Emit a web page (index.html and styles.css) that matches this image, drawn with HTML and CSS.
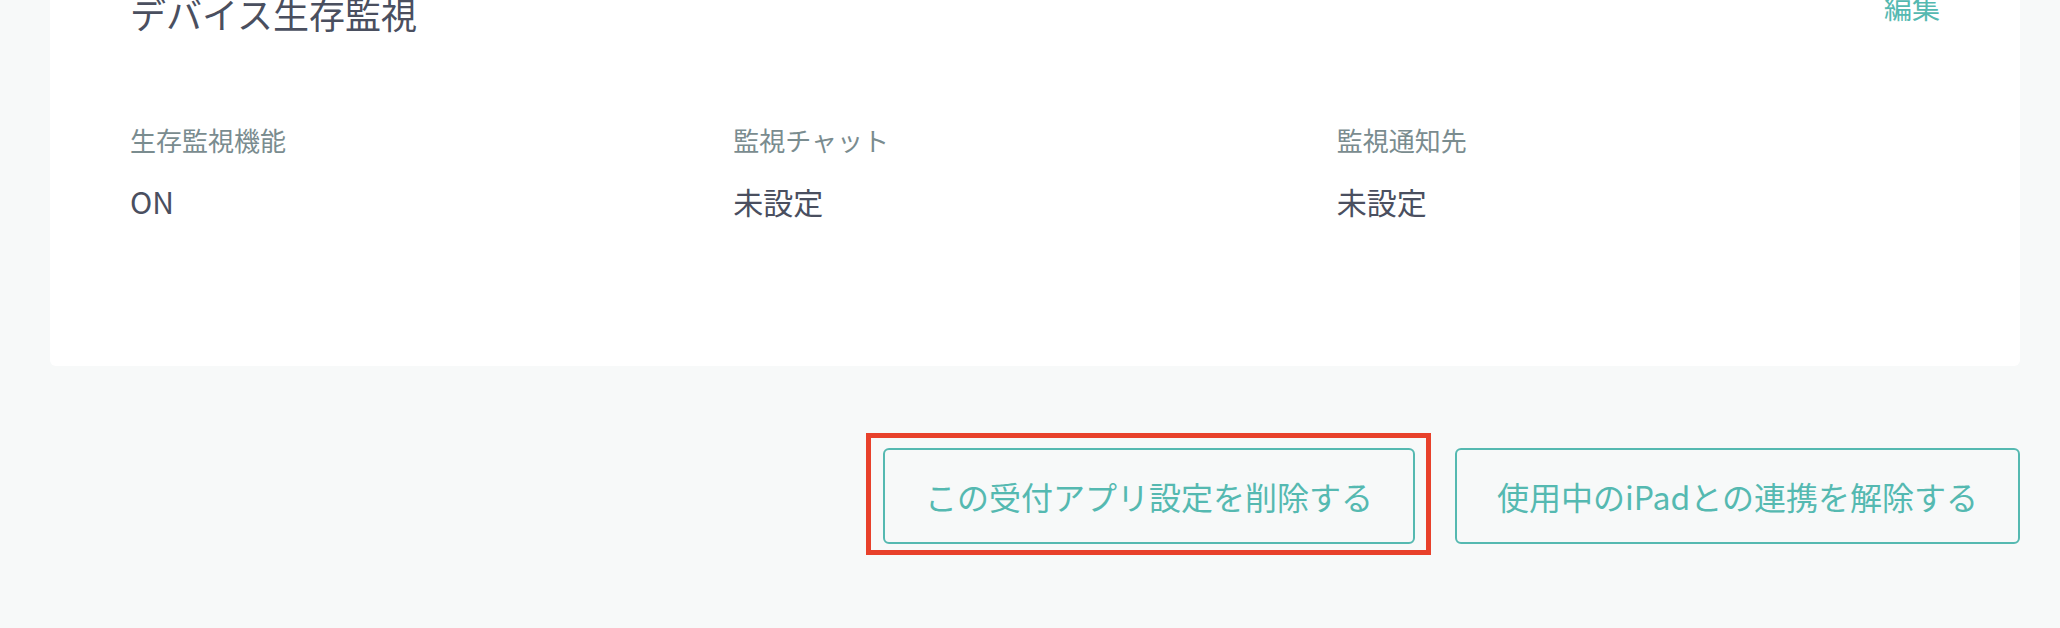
FILE: index.html
```html
<!DOCTYPE html>
<html lang="ja">
<head>
  <meta charset="UTF-8">
  <title>受付アプリ設定</title>
  <link rel="stylesheet" href="styles.css">
</head>
<body>
  <div class="panel">
    <div class="panel-head">
      <h2>デバイス生存監視</h2>
      <a class="edit-link" href="#">編集</a>
    </div>
    <div class="fields">
      <div class="field">
        <div class="field-label">生存監視機能</div>
        <div class="field-value">ON</div>
      </div>
      <div class="field">
        <div class="field-label">監視チャット</div>
        <div class="field-value">未設定</div>
      </div>
      <div class="field">
        <div class="field-label">監視通知先</div>
        <div class="field-value">未設定</div>
      </div>
    </div>
  </div>

  <div class="actions">
    <button class="btn-outline highlight">この受付アプリ設定を削除する</button>
    <button class="btn-outline">使用中のiPadとの連携を解除する</button>
  </div>
</body>
</html>
```

FILE: styles.css
```css
body {
  margin: 0;
  padding-bottom: 100px;
  background-color: #f7f9f9;
  font-family: "Noto Sans CJK JP", "Noto Sans", sans-serif;
  color: #4a4f5f;
}
.panel {
  margin: -46px 40px 0 50px;
  padding: 32px 80px 142px 80px;
  background-color: #fff;
  border-radius: 6px;
}
.panel-head {
  display: flex;
  justify-content: space-between;
  align-items: flex-start;
}
.panel-head h2 {
  margin: 0;
  font-size: 36px;
  font-weight: normal;
  line-height: 1.5;
}
.edit-link {
  font-size: 28px;
  line-height: 1.5;
  color: #55b9b1;
  text-decoration: none;
}
.fields {
  display: grid;
  grid-template-columns: repeat(3, 1fr);
  margin-top: 80px;
}
.field-label {
  font-size: 26px;
  line-height: 1.5;
  color: #7a8c8f;
}
.field-value {
  margin-top: 20px;
  font-size: 30px;
  line-height: 1.5;
}
.actions {
  display: flex;
  justify-content: flex-end;
  gap: 40px;
  margin: 82px 40px 0 50px;
}
.btn-outline {
  position: relative;
  height: 96px;
  padding: 0 40px;
  font-family: inherit;
  font-size: 32px;
  color: #55b9b1;
  background-color: transparent;
  border: 2px solid #55b9b1;
  border-radius: 6px;
  cursor: pointer;
}
/* annotation box drawn over the first button */
.highlight::after {
  content: "";
  position: absolute;
  top: -17px;
  left: -19px;
  right: -18px;
  bottom: -13px;
  border: 5px solid #e8412b;
}
```
